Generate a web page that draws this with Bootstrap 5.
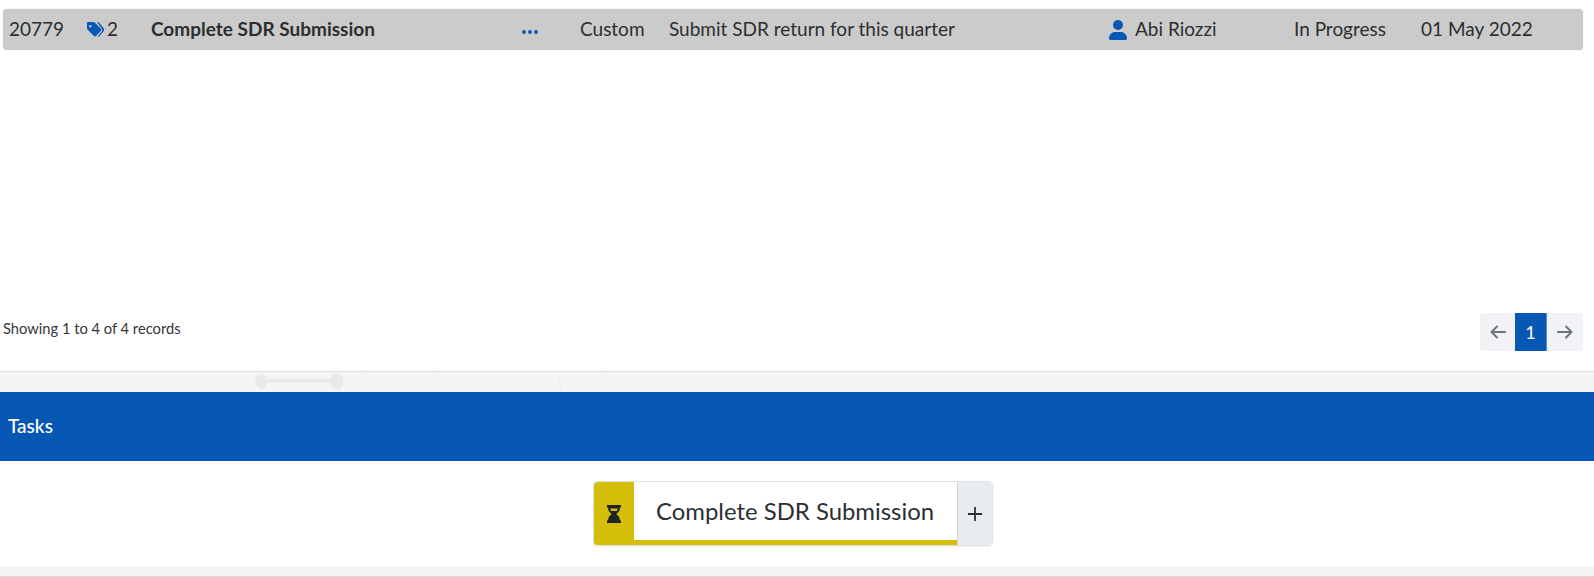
<!DOCTYPE html>
<html lang="en">
<head>
<meta charset="utf-8">
<title>Tasks</title>
<link rel="stylesheet" href="https://cdn.jsdelivr.net/npm/bootstrap@5.3.0/dist/css/bootstrap.min.css">
<style>
html,body{height:577px;overflow:hidden}
body{font-family:Lato,"Liberation Sans",sans-serif;color:#212529;background:#fff;font-size:19px}
.top-zone{height:371px;padding:9px 11px 0 3px}
.rec-row{height:41px;background:#cbcbcb;border-radius:4px;box-shadow:0 0 1px #bbb;line-height:40px;color:#2b2e31}
.rec-row>div{white-space:nowrap;flex:none}
.c-id{width:78px;padding-left:6px}
.c-tag{width:70px;padding-left:5px}
.c-title{width:371px;font-weight:700}
.c-dots{width:58px}
.c-type{width:89px}
.c-desc{width:440px}
.c-user{width:185px}
.c-state{width:127px}
.c-date{width:140px}
.tint{color:#0757b5;fill:#0757b5}
.tag-ic{width:18px;height:16px;vertical-align:-2px;margin-right:3px}
.user-ic{width:18px;height:20px;vertical-align:-4px;margin-right:8px}
.dots-ic{width:16px;height:4px;vertical-align:2px}
.foot-row{margin-top:263px;height:38px}
.rec-info{font-size:14.7px;color:#33373b;line-height:30px}
.pager{height:38px;border-radius:4px;overflow:hidden;background:#f0f2f5}
.pager-btn{width:35px;color:#6c757d;display:flex;align-items:center;justify-content:center}
.pager-end{width:36px}
.pager-on{width:32px;background:#0757b5;color:#fff;border-right:1px solid #5a8fd0;display:flex;align-items:center;justify-content:center;font-size:18px}
.band{height:21px;background:#f4f5f7;border-top:1px solid #dedede;position:relative;overflow:hidden}
.band-art{position:absolute;left:0;top:-1px;width:800px;height:21px}
.head-bar{height:69px;background:#0757b5;color:#fff;font-size:19px;font-weight:500;padding-left:8px;display:flex;align-items:center;padding-bottom:1px}
.task-zone{height:105px;padding-top:20px;padding-right:8px}
.task-chip{width:400px;height:65px;border:1px solid #dee2e6;border-radius:5px;overflow:hidden;box-shadow:0 1px 1px rgba(0,0,0,.06)}
.chip-main{width:363px;flex:none;border-bottom:5px solid #d4be07;display:flex}
.chip-ic{width:40px;background:#d4be07;margin-bottom:-5px;display:flex;align-items:center;justify-content:center;flex:none}
.chip-ic svg{width:14px;height:18px}
.chip-text{flex:1;font-size:23.9px;text-align:center;line-height:58px;color:#2b2f33;padding-right:1px;white-space:nowrap}
.chip-add{flex:1;background:#e9ecef;border-left:1px solid #ced4da;color:#2b2f33;display:flex;align-items:center;justify-content:center;padding-right:1px}
.end-band{height:11px;background:#f4f5f7;border-bottom:1px solid #d8dadd}
</style>
</head>
<body>
<div class="top-zone">
  <div class="rec-row d-flex">
    <div class="c-id">20779</div>
    <div class="c-tag"><svg class="tag-ic tint" viewBox="0 0 18 16"><path fill-rule="evenodd" d="M1 1.200C1 .5 1.500 0 2.200 0h5.300c.5 0 1 .2 1.300.6l6 6.200c.6.6.6 1.600 0 2.200l-4.700 5c-.6.6-1.600.6-2.200 0L1.500 7.600C1.200 7.300 1 6.800 1 6.300zM4.300 3a1.300 1.300 0 1 0 0 2.600 1.300 1.300 0 0 0 0-2.600z"/><path d="M11 0h.8c.5 0 .9.2 1.200.5l4.400 5.500c.8 1 .8 2.400 0 3.400l-4.200 5.200c-.4.500-1 .5-1.500.2l4-5.400c.6-.8.6-1.800 0-2.600z"/></svg>2</div>
    <div class="c-title">Complete SDR Submission</div>
    <div class="c-dots"><svg class="dots-ic tint" viewBox="0 0 16 4"><circle cx="2" cy="2" r="1.900"/><circle cx="8" cy="2" r="1.900"/><circle cx="14" cy="2" r="1.900"/></svg></div>
    <div class="c-type">Custom</div>
    <div class="c-desc">Submit SDR return for this quarter</div>
    <div class="c-user"><svg class="user-ic tint" viewBox="0 0 18 20"><circle cx="9" cy="5" r="5"/><path d="M0 18.500C0 14.500 3 12 6 12h6c3 0 6 2.500 6 6.500 0 .9-.6 1.500-1.500 1.500h-15C.6 20 0 19.400 0 18.500z"/></svg>Abi Riozzi</div>
    <div class="c-state">In Progress</div>
    <div class="c-date">01 May 2022</div>
  </div>
  <div class="foot-row d-flex justify-content-between align-items-start">
    <div class="rec-info">Showing 1 to 4 of 4 records</div>
    <div class="pager d-flex">
      <div class="pager-btn"><svg width="16" height="14" viewBox="0 0 16 14" fill="none" stroke="currentColor" stroke-width="2" stroke-linecap="round" stroke-linejoin="round"><path d="M15 7H1.500M7 1.500 1.500 7 7 12.500"/></svg></div>
      <div class="pager-on">1</div>
      <div class="pager-btn pager-end"><svg width="16" height="14" viewBox="0 0 16 14" fill="none" stroke="currentColor" stroke-width="2" stroke-linecap="round" stroke-linejoin="round"><path d="M1 7h13.500M9 1.500 14.500 7 9 12.500"/></svg></div>
    </div>
  </div>
</div>
<div class="band">
  <svg class="band-art" viewBox="0 0 800 21" fill="none" stroke="#e8e9ea"><path d="M265 10H336" stroke-width="3.500"/><path d="M272 0 262 8M315 0l6 21M333 0l6 21M344 10 370 0M404 21 442 0M522 0l7 21M558 0l3 21M600 0l40 21" stroke="#eeeff0"/><ellipse cx="261" cy="10.500" rx="5.500" ry="7" fill="#e8e9ea"/><ellipse cx="337" cy="10.500" rx="6" ry="7.500" fill="#e8e9ea"/></svg>
</div>
<div class="head-bar">Tasks</div>
<div class="task-zone d-flex justify-content-center">
  <div class="task-chip d-flex">
    <div class="chip-main">
      <div class="chip-ic"><svg viewBox="0 0 14 18" fill="#1f2326"><path fill-rule="evenodd" d="M0 0h14v2.400h-1.200v1.300c0 2.400-2 3.900-3.600 5.300 1.600 1.400 3.600 2.900 3.600 5.300v1.300H14V18H0v-2.400h1.200v-1.300C1.200 11.900 3.200 10.400 4.800 9 3.200 7.600 1.200 6.100 1.200 3.700V2.400H0zM3.400 3.600v.2c0 1 .3 1.700.8 2.300h5.600c.5-.6.800-1.300.8-2.300v-.2z"/></svg></div>
      <div class="chip-text">Complete SDR Submission</div>
    </div>
    <div class="chip-add"><svg width="14" height="14" viewBox="0 0 14 14" stroke="currentColor" stroke-width="1.800"><path d="M7 0v14M0 7h14"/></svg></div>
  </div>
</div>
<div class="end-band"></div>
</body>
</html>
